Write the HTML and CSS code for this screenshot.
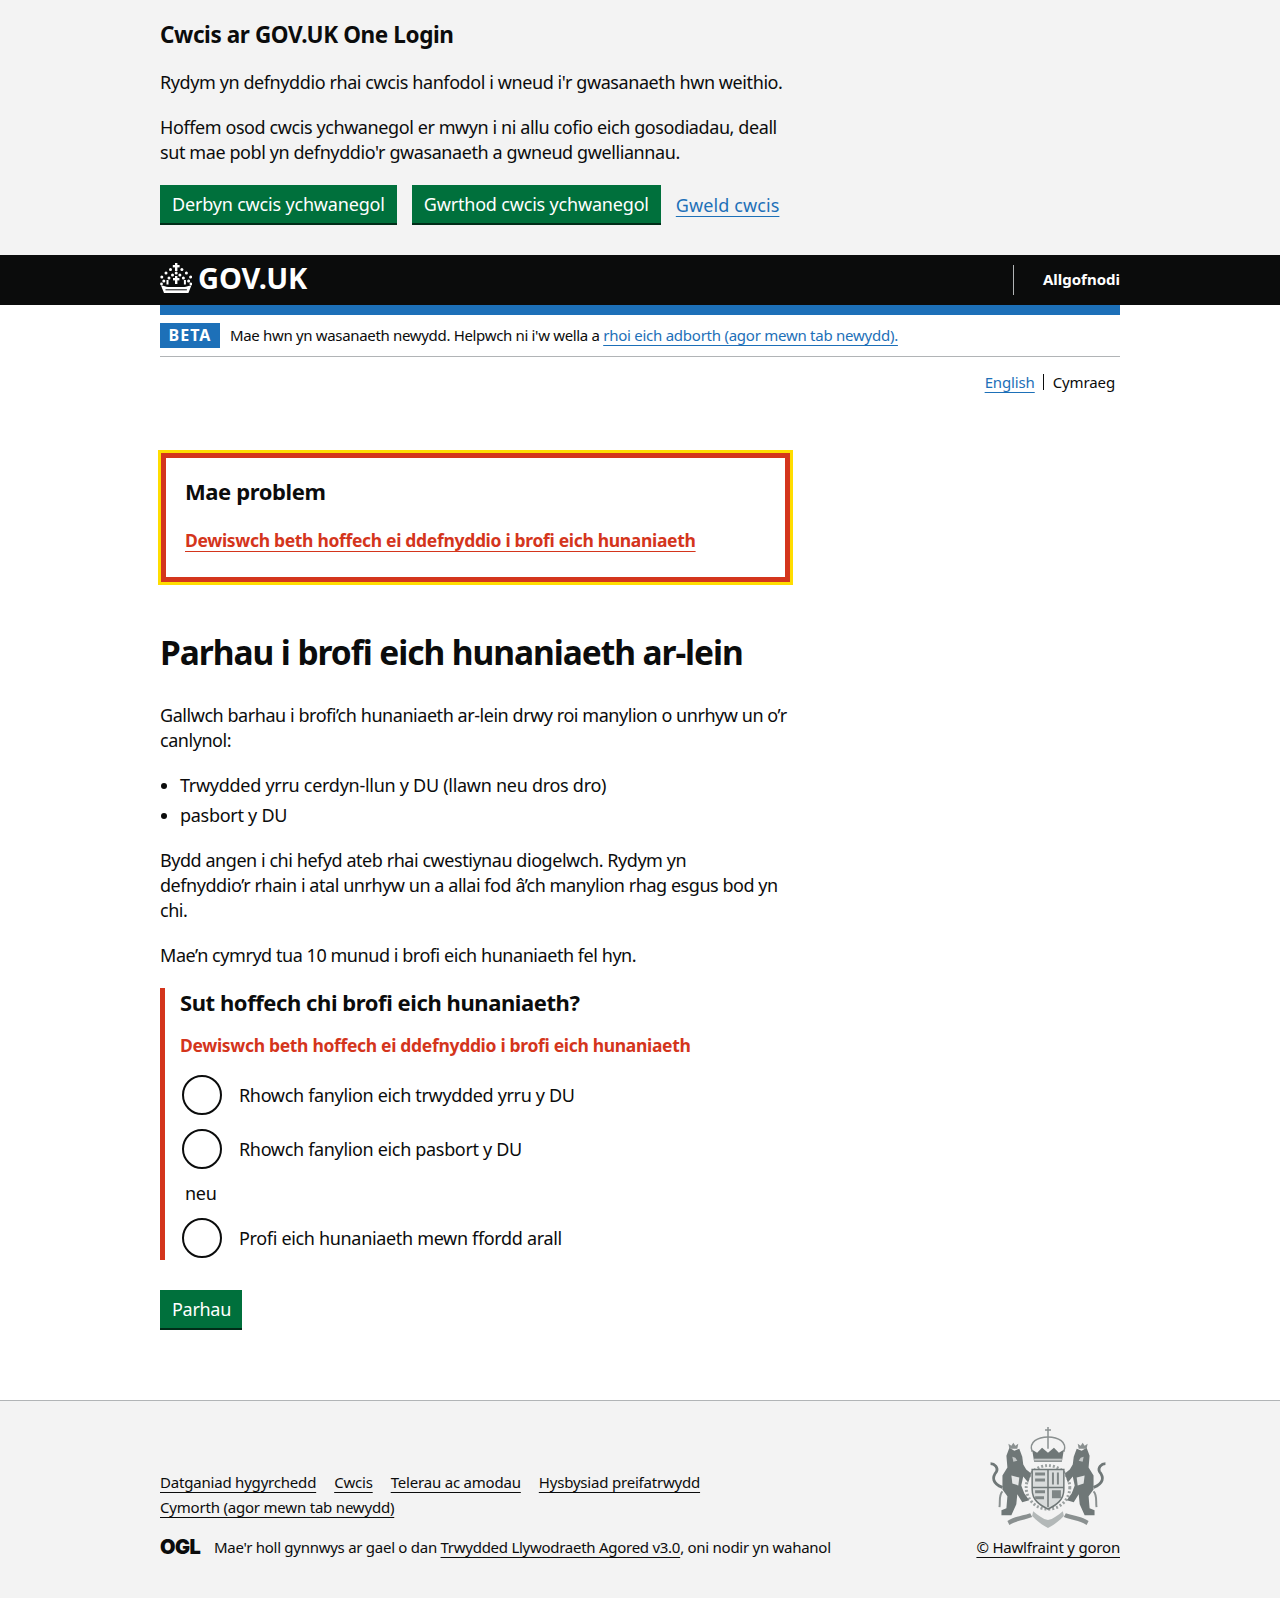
FILE: index.html
```html
<!DOCTYPE html>
<html lang="cy">

<head>
  <meta charset="UTF-8">
  <title>Parhau i brofi eich hunaniaeth ar-lein</title>
  <link rel="stylesheet" href="styles.css">
</head>

<body>
  <!-- Cookie banner -->
  <div class="cookie-banner">
    <div class="width-container">
      <div class="two-thirds">
        <h2 class="cookie-title">Cwcis ar GOV.UK One Login</h2>
        <p class="body-text">Rydym yn defnyddio rhai cwcis hanfodol i wneud i'r gwasanaeth hwn weithio.</p>
        <p class="body-text">Hoffem osod cwcis ychwanegol er mwyn i ni allu cofio eich gosodiadau, deall sut mae pobl yn defnyddio'r gwasanaeth a gwneud gwelliannau.</p>
        <div class="button-group">
          <a class="button" href="#">Derbyn cwcis ychwanegol</a>
          <a class="button" href="#">Gwrthod cwcis ychwanegol</a>
          <a class="link" href="#">Gweld cwcis</a>
        </div>
      </div>
    </div>
  </div>

  <!-- Header -->
  <header class="site-header">
    <div class="width-container header-inner">
      <a class="logo" href="#">
        <svg class="crown" viewBox="0 0 32 30" width="32" height="30" fill="#fff">
          <rect x="15" y="0" width="2.4" height="8"/>
          <rect x="12.8" y="2" width="6.800" height="2.4"/>
          <circle cx="16.200" cy="10" r="1.500"/>
          <circle cx="10.500" cy="6.500" r="1.500"/>
          <circle cx="21.900" cy="6.500" r="1.500"/>
          <circle cx="6" cy="10" r="1.500"/>
          <circle cx="26.400" cy="10" r="1.500"/>
          <circle cx="12.500" cy="12" r="1.500"/>
          <circle cx="19.900" cy="12" r="1.500"/>
          <circle cx="1.800" cy="14" r="1.500"/>
          <circle cx="30.600" cy="14" r="1.500"/>
          <circle cx="3.800" cy="18" r="1.500"/>
          <circle cx="28.600" cy="18" r="1.500"/>
          <circle cx="9" cy="15" r="1.500"/>
          <circle cx="23.400" cy="15" r="1.500"/>
          <rect x="15" y="13" width="2.4" height="8"/>
          <rect x="13" y="15" width="6.400" height="2.400"/>
          <rect x="6.500" y="17" width="2" height="4.500"/>
          <rect x="23.900" y="17" width="2" height="4.500"/>
          <circle cx="1.500" cy="21" r="1.400"/>
          <circle cx="30.900" cy="21" r="1.400"/>
          <path d="M1 22.500c3 .3 5 1.500 7 1.500h16.400c2 0 4-1.200 7-1.500l-3 7.500H4z"/>
          <path d="M5.500 26.300h21.400v1h-21.400z" fill="#0b0c0c"/>
        </svg>
        <span class="logo-text">GOV.UK</span>
      </a>
      <a class="sign-out" href="#">Allgofnodi</a>
    </div>
  </header>

  <div class="width-container">
    <div class="blue-bar"></div>
    <div class="phase-banner">
      <strong class="tag">BETA</strong>
      <span class="phase-text">Mae hwn yn wasanaeth newydd. Helpwch ni i'w wella a <a class="link" href="#">rhoi eich adborth (agor mewn tab newydd).</a></span>
    </div>
    <div class="language-toggle">
      <a class="link" href="#">English</a>
      <span class="language-current">Cymraeg</span>
    </div>

    <main class="main-wrapper">
      <div class="two-thirds">
        <div class="error-summary">
          <h2 class="error-title">Mae problem</h2>
          <a class="error-link" href="#">Dewiswch beth hoffech ei ddefnyddio i brofi eich hunaniaeth</a>
        </div>

        <h1 class="page-title">Parhau i brofi eich hunaniaeth ar-lein</h1>
        <p class="body-text">Gallwch barhau i brofi’ch hunaniaeth ar-lein drwy roi manylion o unrhyw un o’r canlynol:</p>
        <ul class="bullets">
          <li>Trwydded yrru cerdyn-llun y DU (llawn neu dros dro)</li>
          <li>pasbort y DU</li>
        </ul>
        <p class="body-text">Bydd angen i chi hefyd ateb rhai cwestiynau diogelwch. Rydym yn<br>defnyddio’r rhain i atal unrhyw un a allai fod â’ch manylion rhag esgus bod yn chi.</p>
        <p class="body-text">Mae’n cymryd tua 10 munud i brofi eich hunaniaeth fel hyn.</p>

        <div class="form-group-error">
          <h2 class="legend">Sut hoffech chi brofi eich hunaniaeth?</h2>
          <p class="error-message">Dewiswch beth hoffech ei ddefnyddio i brofi eich hunaniaeth</p>
          <div class="radio-item"><span class="radio"></span><span class="radio-label">Rhowch fanylion eich trwydded yrru y DU</span></div>
          <div class="radio-item"><span class="radio"></span><span class="radio-label">Rhowch fanylion eich pasbort y DU</span></div>
          <div class="radio-divider">neu</div>
          <div class="radio-item"><span class="radio"></span><span class="radio-label">Profi eich hunaniaeth mewn ffordd arall</span></div>
        </div>

        <a class="button button-continue" href="#">Parhau</a>
      </div>
    </main>
  </div>

  <!-- Footer -->
  <footer class="site-footer">
    <div class="width-container footer-inner">
      <div class="footer-meta">
        <ul class="footer-links">
          <li><a href="#">Datganiad hygyrchedd</a></li>
          <li><a href="#">Cwcis</a></li>
          <li><a href="#">Telerau ac amodau</a></li>
          <li><a href="#">Hysbysiad preifatrwydd</a></li>
          <li><a href="#">Cymorth (agor mewn tab newydd)</a></li>
        </ul>
        <div class="licence">
          <span class="ogl">OGL</span>
          <span>Mae'r holl gynnwys ar gael o dan <a href="#">Trwydded Llywodraeth Agored v3.0</a>, oni nodir yn wahanol</span>
        </div>
      </div>
      <div class="copyright">
        <svg class="arms" viewBox="0 0 118 103" width="118" height="102">
          <defs>
            <g id="supporter">
              <path d="M17 30l3-8 5 3 5-2 3 8 1 8 3 5 5 4-3 9-5-6-2 9 3 8 5 7-7 2-5-8-1 10-5 11-10 0 0-5 5-2 1-12-5-7 0-14 5-8z" fill="#6f7777"/>
              <path d="M22 50l8 2-1 8-6-2z" fill="#e4e6e6"/>
              <path d="M23 31l3 1 2 3-4 1z" fill="#c5c9c9"/>
              <path d="M13 62C3 58 2 52 7 46c2-4-2-8-6-8" fill="none" stroke="#6f7777" stroke-width="2.800"/>
              <path d="M13 66c-4 4-2 10-3 16" fill="none" stroke="#8a9090" stroke-width="2"/>
              <path d="M20 23l-1-5 3 2 2-3 2 3 3-2-1 5z" fill="#8a9090"/>
            </g>
          </defs>
          <!-- crown -->
          <g fill="none" stroke="#8a9090" stroke-width="1.500">
            <path d="M59 1v10M56 4h6"/>
            <path d="M43 26c-4-10 6-15 16-15s20 5 16 15"/>
            <path d="M59 11v12"/>
          </g>
          <path d="M43 24l5 3 5-5 6 5 6-5 5 5 5-3-2 12H45z" fill="#6f7777"/>
          <path d="M45 33h28v2H45z" fill="#c5c9c9"/>
          <!-- shield -->
          <circle cx="59" cy="62" r="22" fill="none" stroke="#9aa0a0" stroke-width="3" stroke-dasharray="2 2"/>
          <path d="M43 44h32v20c0 11-8 16-16 20-8-4-16-9-16-20z" fill="#d9dcdc" stroke="#6f7777" stroke-width="1.500"/>
          <path d="M59 44v38M43 62h32" stroke="#6f7777" stroke-width="1.500"/>
          <path d="M46 47h10v3H46zM46 53h10v3H46zM63 47h2v12h-2zM68 47h2v12h-2zM46 65h10v3H46zM46 71h9v3H46zM63 65h9v8H63z" fill="#7f8686"/>
          <use href="#supporter"/>
          <use href="#supporter" transform="matrix(-1 0 0 1 118 0)"/>
          <!-- motto -->
          <path d="M18 96c7-5 14-5 23-8l2 4c-7 3-15 3-23 8z" fill="#8a9090"/>
          <path d="M100 96c-7-5-14-5-23-8l-2 4c7 3 15 3 23 8z" fill="#8a9090"/>
          <path d="M44 86c5 4 10 8 15 9 5-1 10-5 15-9l1 5c-6 6-10 9-16 12-6-3-10-6-16-12z" fill="#b3b8b8"/>
        </svg>
        <a href="#">© Hawlfraint y goron</a>
      </div>
    </div>
  </footer>
</body>

</html>
```

FILE: styles.css
```css
* {
  box-sizing: border-box;
}

body {
  margin: 0;
  font-family: "Noto Sans", Arial, sans-serif;
  font-size: 18px;
  line-height: 25px;
  letter-spacing: -0.28px;
  color: #0b0c0c;
  background-color: #fff;
}

a {
  text-decoration-thickness: 1px;
  text-underline-offset: 4px;
  text-decoration-skip-ink: none;
}

.width-container {
  width: 960px;
  margin: 0 auto;
}

.two-thirds {
  width: 630px;
}

a.link {
  color: #1d70b8;
}

.body-text {
  margin: 0 0 20px;
  letter-spacing: -0.45px;
}

/* Cookie banner */
.cookie-banner {
  background-color: #f3f3f3;
  height: 255px;
  padding-top: 20px;
}

.cookie-banner .body-text {
  letter-spacing: -0.41px;
}

.cookie-title {
  margin: 0 0 20px;
  font-size: 22.5px;
  line-height: 30px;
  font-weight: 700;
  letter-spacing: -0.4px;
}

.button-group {
  display: flex;
  align-items: center;
  gap: 15px;
}

.button-group .link {
  letter-spacing: 0.1px;
}

.button {
  display: inline-block;
  background-color: #00703c;
  color: #fff;
  text-decoration: none;
  letter-spacing: -0.18px;
  padding: 7px 12px 6px;
  border-bottom: 2px solid #002d18;
  height: 40px;
}

.button-continue {
  width: 82px;
  padding-right: 0;
  letter-spacing: -0.3px;
}

/* Header */
.site-header {
  background-color: #0b0c0c;
  height: 50px;
}

.header-inner {
  display: flex;
  justify-content: space-between;
  align-items: center;
  height: 50px;
}

.logo {
  display: flex;
  align-items: center;
  gap: 6px;
  padding-bottom: 4px;
  color: #fff;
  text-decoration: none;
}

.logo-text {
  font-size: 29px;
  font-weight: 700;
  line-height: 30px;
  letter-spacing: -0.1px;
}

.sign-out {
  color: #fff;
  font-size: 15px;
  font-weight: 700;
  text-decoration: none;
  letter-spacing: 0;
  border-left: 1px solid #b1b4b6;
  padding-left: 29px;
  padding-bottom: 1px;
  line-height: 29px;
}

/* Phase banner */
.blue-bar {
  height: 10px;
  background-color: #1d70b8;
}

.phase-banner {
  display: flex;
  align-items: center;
  gap: 10px;
  height: 42px;
  border-bottom: 1px solid #b1b4b6;
  font-size: 15px;
  letter-spacing: -0.33px;
}

.phase-banner .link {
  letter-spacing: -0.25px;
}

.tag {
  background-color: #1d70b8;
  color: #fff;
  font-size: 16px;
  letter-spacing: 1px;
  line-height: 25px;
  width: 60px;
  text-align: center;
}

.language-toggle {
  display: flex;
  justify-content: flex-end;
  align-items: center;
  height: 20px;
  margin-top: 15px;
  padding-right: 5px;
  font-size: 15px;
  line-height: 16px;
  letter-spacing: -0.13px;
}

.language-current {
  border-left: 1px solid #0b0c0c;
  margin-left: 8px;
  padding-left: 9px;
}

/* Main */
.main-wrapper {
  padding-top: 61px;
  padding-bottom: 70px;
}

.error-summary {
  border: 5px solid #d4351c;
  outline: 3px solid #fd0;
  margin-left: 1px;
  width: 629px;
  height: 129px;
  padding: 18px 19px;
  margin-bottom: 45px;
}

.error-title {
  margin: 0 0 22px;
  font-size: 22px;
  line-height: 30px;
  font-weight: 700;
  letter-spacing: -0.4px;
}

.error-link {
  color: #d4351c;
  font-size: 17.5px;
  font-weight: 700;
  letter-spacing: -0.32px;
}

.page-title {
  margin: 0 0 26px;
  font-size: 33.5px;
  line-height: 50px;
  font-weight: 700;
  letter-spacing: -1.05px;
}

.bullets {
  margin: 0 0 20px;
  padding-left: 20px;
}

.bullets li {
  margin-bottom: 5px;
}

.form-group-error {
  border-left: 5px solid #d4351c;
  padding-left: 15px;
  padding-bottom: 2px;
  margin-bottom: 30px;
}

.legend {
  margin: 0 0 17px;
  font-size: 22px;
  line-height: 28px;
  font-weight: 700;
  letter-spacing: -0.43px;
}

.error-message {
  margin: 0 0 17px;
  color: #d4351c;
  font-size: 17.5px;
  font-weight: 700;
  letter-spacing: -0.32px;
}

.radio-item {
  display: flex;
  align-items: center;
  gap: 17px;
  height: 40px;
  margin-bottom: 14px;
  padding-left: 2px;
  letter-spacing: -0.33px;
}

.radio-item:last-child {
  margin-bottom: 0;
}

.radio {
  width: 40px;
  height: 40px;
  border: 2px solid #0b0c0c;
  border-radius: 50%;
}

.radio-divider {
  padding-left: 5px;
  margin-top: -2px;
  margin-bottom: 12px;
}

/* Footer */
.site-footer {
  background-color: #f3f3f3;
  border-top: 1px solid #b1b4b6;
  font-size: 15px;
  letter-spacing: -0.2px;
  height: 198px;
}

.site-footer a {
  color: #0b0c0c;
}

.footer-inner {
  display: flex;
  justify-content: space-between;
  align-items: flex-end;
  padding-top: 25px;
}

.footer-links {
  list-style: none;
  margin: 0 0 15px;
  padding: 0;
  display: flex;
  flex-wrap: wrap;
  column-gap: 18px;
  max-width: 600px;
}

.licence {
  display: flex;
  align-items: center;
  gap: 13px;
  letter-spacing: -0.27px;
}

.ogl {
  font-family: Inter, sans-serif;
  font-weight: 900;
  font-size: 20px;
  letter-spacing: -0.6px;
  width: 41px;
}

.copyright {
  display: flex;
  flex-direction: column;
  align-items: center;
  gap: 7px;
}

.arms {
  display: block;
}
```
